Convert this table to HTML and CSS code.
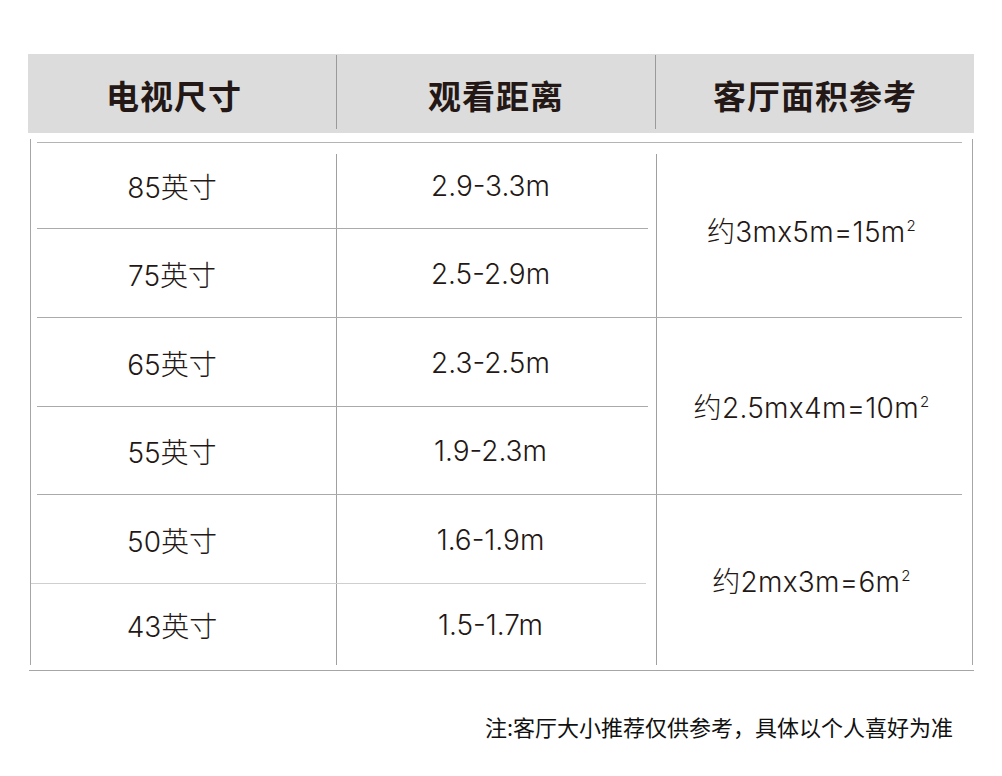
FILE: index.html
```html
<!DOCTYPE html>
<html lang="zh-CN">
<head>
<meta charset="utf-8">
<title>电视尺寸与观看距离</title>
<link rel="stylesheet" href="styles.css">
</head>
<body>
<div class="page">
  <div class="head">
    <div class="hc hc1">电视尺寸</div>
    <div class="hc">观看距离</div>
    <div class="hc">客厅面积参考</div>
  </div>
  <div class="tbl">
    <div class="hl top"></div>
    <div class="vl v1"></div>
    <div class="vl v2"></div>

    <div class="cell s1 y1">85英寸</div>
    <div class="cell s2 y1">2.9-3.3m</div>
    <div class="hl part r3"></div>
    <div class="cell s1 y2">75英寸</div>
    <div class="cell s2 y2">2.5-2.9m</div>
    <div class="cell ar a1"><span>约3mx5m=15m<sup class="sq">2</sup></span></div>

    <div class="hl full r5"></div>
    <div class="cell s1 y3">65英寸</div>
    <div class="cell s2 y3">2.3-2.5m</div>
    <div class="hl part r7"></div>
    <div class="cell s1 y4">55英寸</div>
    <div class="cell s2 y4">1.9-2.3m</div>
    <div class="cell ar a2"><span>约2.5mx4m=10m<sup class="sq">2</sup></span></div>

    <div class="hl full r9"></div>
    <div class="cell s1 y5">50英寸</div>
    <div class="cell s2 y5">1.6-1.9m</div>
    <div class="hl part wide r11"></div>
    <div class="cell s1 y6">43英寸</div>
    <div class="cell s2 y6">1.5-1.7m</div>
    <div class="cell ar a3"><span>约2mx3m=6m<sup class="sq">2</sup></span></div>
  </div>
  <div class="bottom-line"></div>
</div>
<p class="note">注:客厅大小推荐仅供参考，具体以个人喜好为准</p>
</body>
</html>
```

FILE: styles.css
```css
html, body {
  margin: 0;
  padding: 0;
  background: #ffffff;
}
body {
  width: 1002px;
  height: 776px;
  overflow: hidden;
  font-family: Inter, "Noto Sans CJK SC", sans-serif;
  color: #231815;
}
.page {
  padding: 54px 0 0 28px;
}
.head {
  display: grid;
  grid-template-columns: 308px 319px 319px;
  width: 946px;
  height: 79px;
  background: #dcdcdc;
  align-items: start;
}
.hc {
  height: 74px;
  margin-top: 1px;
  box-sizing: border-box;
  padding-top: 6px;
  display: flex;
  align-items: center;
  justify-content: center;
  font-family: "Noto Sans CJK SC", sans-serif;
  font-weight: 700;
  font-size: 33px;
  letter-spacing: 1px;
  color: #231815;
}
.hc + .hc {
  border-left: 1px solid #9a9a9a;
}
.hc1 {
  padding-right: 16px;
}
.tbl {
  margin: 6px 0 0 2px;
  width: 941px;
  border-left: 1px solid #a6a6a6;
  border-right: 1px solid #a6a6a6;
  padding-top: 3px;
  display: grid;
  grid-template-columns: 6px 299px 1px 319px 1px 305px 10px;
  grid-template-rows: 1px 85px 1px 88px 1px 88px 1px 87px 1px 88px 1px 81px;
}
.hl {
  background: #ababab;
  height: 1px;
}
.hl.top { grid-row: 1; grid-column: 2 / 7; background: #b4b4b4; }
.hl.full { grid-column: 2 / 7; }
.hl.part { grid-column: 2 / 5; margin-right: 8px; }
.hl.wide { grid-column: 1 / 5; margin-right: 10px; background: #cfcfcf; }
.r3 { grid-row: 3; }
.r5 { grid-row: 5; }
.r7 { grid-row: 7; }
.r9 { grid-row: 9; }
.r11 { grid-row: 11; }
.vl {
  grid-row: 1 / -1;
  margin-top: 12px;
  background: #a0a0a0;
  width: 1px;
}
.v1 { grid-column: 3; }
.v2 { grid-column: 5; }
.cell {
  display: flex;
  align-items: center;
  justify-content: center;
  font-size: 28px;
  font-weight: 300;
  padding-top: 1px;
  color: #231815;
  white-space: nowrap;
}
.sq {
  font-size: 15px;
  line-height: 0;
  vertical-align: 0.75em;
  margin-left: 1px;
}
.s1 { grid-column: 2; padding-right: 29px; }
.s2 { grid-column: 4; padding-right: 12px; }
.ar { grid-column: 6; padding-top: 0; padding-left: 4px; letter-spacing: 0.3px; }
.y1 { grid-row: 2; }
.y2 { grid-row: 4; }
.y3 { grid-row: 6; }
.y4 { grid-row: 8; }
.y5 { grid-row: 10; }
.y6 { grid-row: 12; }
.a1 { grid-row: 2 / 5; }
.a2 { grid-row: 6 / 9; }
.a3 { grid-row: 10 / 13; }
.bottom-line {
  margin: 5px 0 0 1px;
  width: 945px;
  height: 1px;
  background: #a6a6a6;
}
.note {
  margin: 40px 0 0 0;
  width: 1002px;
  box-sizing: border-box;
  padding-right: 49px;
  text-align: right;
  font-family: "Noto Sans CJK SC", sans-serif;
  font-size: 22px;
  line-height: 30px;
  color: #111111;
}
```
